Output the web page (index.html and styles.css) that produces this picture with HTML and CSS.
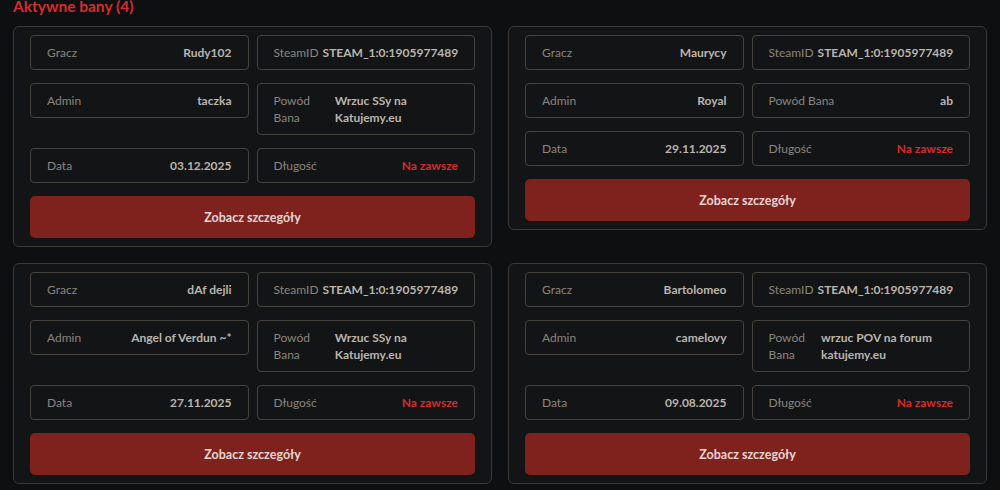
FILE: index.html
```html
<!DOCTYPE html>
<html lang="pl">
<head>
    <meta charset="UTF-8">
    <meta name="viewport" content="width=device-width, initial-scale=1.0">
    <title>Aktywne bany</title>
    <link rel="stylesheet" href="styles.css">
</head>
<body>

    <div class="page">
        <h2 class="section-title">Aktywne bany (4)</h2>

        <div class="ban-grid">
            <div class="ban-card">
                <div class="ban-info">
                    <div class="info-box"><span class="label">Gracz</span><span class="value">Rudy102</span></div>
                    <div class="info-box steam"><span class="label">SteamID</span><span class="value">STEAM_1:0:1905977489</span></div>
                    <div class="info-box"><span class="label">Admin</span><span class="value">taczka</span></div>
                    <div class="info-box"><span class="label">Powód Bana</span><span class="value reason">Wrzuc SSy na Katujemy.eu</span></div>
                    <div class="info-box"><span class="label">Data</span><span class="value">03.12.2025</span></div>
                    <div class="info-box"><span class="label">Długość</span><span class="value perm">Na zawsze</span></div>
                </div>
                <button class="btn-details">Zobacz szczegóły</button>
            </div>

            <div class="ban-card">
                <div class="ban-info">
                    <div class="info-box"><span class="label">Gracz</span><span class="value">Maurycy</span></div>
                    <div class="info-box steam"><span class="label">SteamID</span><span class="value">STEAM_1:0:1905977489</span></div>
                    <div class="info-box"><span class="label">Admin</span><span class="value">Royal</span></div>
                    <div class="info-box"><span class="label">Powód Bana</span><span class="value reason">ab</span></div>
                    <div class="info-box"><span class="label">Data</span><span class="value">29.11.2025</span></div>
                    <div class="info-box"><span class="label">Długość</span><span class="value perm">Na zawsze</span></div>
                </div>
                <button class="btn-details">Zobacz szczegóły</button>
            </div>

            <div class="ban-card">
                <div class="ban-info">
                    <div class="info-box"><span class="label">Gracz</span><span class="value">dAf dejli</span></div>
                    <div class="info-box steam"><span class="label">SteamID</span><span class="value">STEAM_1:0:1905977489</span></div>
                    <div class="info-box"><span class="label">Admin</span><span class="value">Angel of Verdun ~*</span></div>
                    <div class="info-box"><span class="label">Powód Bana</span><span class="value reason">Wrzuc SSy na Katujemy.eu</span></div>
                    <div class="info-box"><span class="label">Data</span><span class="value">27.11.2025</span></div>
                    <div class="info-box"><span class="label">Długość</span><span class="value perm">Na zawsze</span></div>
                </div>
                <button class="btn-details">Zobacz szczegóły</button>
            </div>

            <div class="ban-card">
                <div class="ban-info">
                    <div class="info-box"><span class="label">Gracz</span><span class="value">Bartolomeo</span></div>
                    <div class="info-box steam"><span class="label">SteamID</span><span class="value">STEAM_1:0:1905977489</span></div>
                    <div class="info-box"><span class="label">Admin</span><span class="value">camelovy</span></div>
                    <div class="info-box"><span class="label">Powód Bana</span><span class="value reason">wrzuc POV na forum katujemy.eu</span></div>
                    <div class="info-box"><span class="label">Data</span><span class="value">09.08.2025</span></div>
                    <div class="info-box"><span class="label">Długość</span><span class="value perm">Na zawsze</span></div>
                </div>
                <button class="btn-details">Zobacz szczegóły</button>
            </div>
        </div>
    </div>

</body>
</html>
```
FILE: styles.css
```css
body {
    font-family: 'Lato', 'Noto Sans', sans-serif;
    margin: 0;
    padding: 0;
    background-color: #0e0f11;
    color: #bab5ad;
    overflow: hidden;
}

* {
    box-sizing: border-box;
}

.page {
    padding: 0 13px;
}

.section-title {
    color: #d92b2b;
    font-size: 15.5px;
    line-height: 20px;
    font-weight: bold;
    margin: -4px 0 10px;
}

.ban-grid {
    display: grid;
    grid-template-columns: minmax(0, 1fr) minmax(0, 1fr);
    column-gap: 16px;
    row-gap: 16px;
    align-items: start;
}

.ban-card {
    background-color: #131416;
    border: 1px solid #3d3a36;
    border-radius: 6px;
    padding: 8px 16px;
}

.ban-info {
    display: grid;
    grid-template-columns: minmax(0, 1fr) minmax(0, 1fr);
    column-gap: 8px;
    row-gap: 13px;
    align-items: start;
}

.info-box {
    display: flex;
    justify-content: space-between;
    gap: 4px;
    border: 1px solid #47433e;
    border-radius: 4px;
    padding: 8px 16px;
    font-size: 12px;
    line-height: 17px;
}

.info-box .label {
    color: #8a857e;
}

.info-box .value {
    font-weight: bold;
    color: #bab5ad;
}

.info-box.steam {
    justify-content: flex-start;
    white-space: nowrap;
}

.value.perm {
    color: #d92b2b;
}

.btn-details {
    display: block;
    width: 100%;
    height: 42px;
    margin-top: 13px;
    border: none;
    border-radius: 5px;
    background-color: #7f221d;
    color: #e3d6d4;
    font-family: inherit;
    font-size: 12.5px;
    font-weight: bold;
    cursor: pointer;
}
```
